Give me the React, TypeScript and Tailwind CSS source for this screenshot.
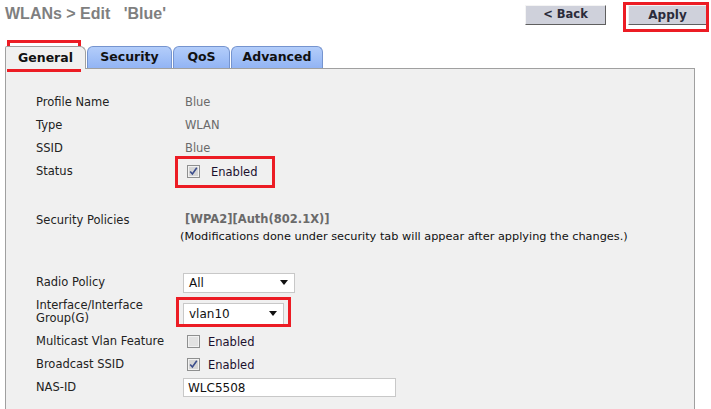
import React from "react";

const body = "font-['DejaVu_Sans',sans-serif]";

const Check = ({ checked }: { checked: boolean }) => (
  <svg width="13" height="13" viewBox="0 0 13 13" className="shrink-0">
    <rect x="0.5" y="0.5" width="12" height="12" fill="#f2f2f2" stroke="#8e8f8f" />
    <rect x="2" y="2" width="9" height="9" fill={checked ? "#d6d6d6" : "#e2e2e2"} />
    {checked && (
      <path d="M3.2 6.4 L5.4 9 L9.8 2.8" stroke="#3b4d8c" strokeWidth="1.6" fill="none" />
    )}
  </svg>
);

const Select = ({ value, width, h = "h-[20px]" }: { value: string; width: string; h?: string }) => (
  <div
    className={`${width} ${h} bg-white border border-[#c8c8c8] flex items-center justify-between pl-[5px] pr-[6px] text-[12px] text-[#111]`}
  >
    <span>{value}</span>
    <svg width="8" height="5" viewBox="0 0 8 5">
      <path d="M0 0 H8 L4 5 Z" fill="#111" />
    </svg>
  </div>
);

const Row = ({
  label,
  children,
  h = "h-[23px]",
}: {
  label: React.ReactNode;
  children?: React.ReactNode;
  h?: string;
}) => (
  <div className={`flex items-center ${h}`}>
    <div className="w-[147px] pl-[30px] box-content text-[#222] leading-[13px]">{label}</div>
    <div className="flex items-center">{children}</div>
  </div>
);

const Enabled = ({ checked, gap = "ml-[8px]" }: { checked: boolean; gap?: string }) => (
  <div className="flex items-center ml-[4px]">
    <Check checked={checked} />
    <span className={`${gap} pt-[3px] text-[#1a0f2e]`}>Enabled</span>
  </div>
);

export default function App() {
  return (
    <div className={`relative w-[711px] h-[409px] overflow-hidden bg-white text-[11.5px] ${body}`}>
      {/* header */}
      <div className="flex h-[46px]">
        <div className="ml-[5px] mt-[5px] leading-[18px] text-[16px] font-bold text-[#7f7f7f] font-['Liberation_Sans',Arial,sans-serif] whitespace-pre">
          {"WLANs > Edit   'Blue'"}
        </div>
        <div className="ml-auto mt-[5px] flex">
          <button className="w-[81px] h-[20px] bg-[#cfd1db] border border-t-[#f4f4f4] border-l-[#f4f4f4] border-r-[#5f5f5f] border-b-[#5f5f5f] text-[11.5px] font-bold text-[#2b2b3a] leading-none">
            &lt; Back
          </button>
          <button className="ml-[22px] mr-[4px] w-[79px] h-[20px] bg-[#cfd1db] border border-t-[#f4f4f4] border-l-[#f4f4f4] border-r-[#5f5f5f] border-b-[#5f5f5f] text-[12px] font-bold text-[#2b2b3a] leading-none">
            Apply
          </button>
        </div>
      </div>

      {/* tabs */}
      <div className="flex items-end h-[22px] ml-[5px] text-[12.5px] font-bold text-[#111]">
        <div className="relative top-[1px] z-10 w-[81px] h-[23px] bg-[#f0f0f0] border border-b-0 border-[#a0a0a0] rounded-tr-[6px] rounded-tl-[2px] flex items-center justify-center">
          General
        </div>
        <div className="ml-[1px] w-[85px] h-[22px] bg-gradient-to-b from-[#b3cdfa] to-[#92b4f4] border border-b-0 border-[#7594cf] rounded-t-[6px] flex items-center justify-center">
          Security
        </div>
        <div className="ml-[1px] w-[57px] h-[22px] bg-gradient-to-b from-[#b3cdfa] to-[#92b4f4] border border-b-0 border-[#7594cf] rounded-t-[6px] flex items-center justify-center">
          QoS
        </div>
        <div className="ml-[1px] w-[92px] h-[22px] bg-gradient-to-b from-[#b3cdfa] to-[#92b4f4] border border-b-0 border-[#7594cf] rounded-t-[6px] flex items-center justify-center">
          Advanced
        </div>
      </div>

      {/* panel */}
      <div className="ml-[5px] w-[690px] h-[360px] bg-[#f0f0f0] border border-[#a0a0a0] pt-[22px]">
        <Row label="Profile Name">
          <span className="ml-[2px] text-[#6a6a6a]">Blue</span>
        </Row>
        <Row label="Type">
          <span className="ml-[2px] text-[#6a6a6a]">WLAN</span>
        </Row>
        <Row label="SSID">
          <span className="ml-[2px] text-[#6a6a6a]">Blue</span>
        </Row>
        <Row label="Status">
          <Enabled checked gap="ml-[11px]" />
        </Row>

        <div className="h-[27px]" />
        <Row label="Security Policies" h="h-[20px]">
          <span className="ml-[2px] font-bold text-[#6a6a6a]">[WPA2][Auth(802.1X)]</span>
        </Row>
        <div className="h-[14px] leading-[14px] pl-[174px] text-[11.3px] text-[#111]">
          (Modifications done under security tab will appear after applying the changes.)
        </div>

        <div className="h-[27px]" />
        <Row label="Radio Policy">
          <Select value="All" width="w-[112px]" />
        </Row>
        <Row label={<>Interface/Interface<br />Group(G)</>} h="h-[36px]">
          <div className="pt-[3px]">
            <Select value="vlan10" width="w-[101px]" h="h-[22px]" />
          </div>
        </Row>
        <Row label="Multicast Vlan Feature">
          <Enabled checked={false} />
        </Row>
        <Row label="Broadcast SSID">
          <Enabled checked />
        </Row>
        <Row label="NAS-ID">
          <div className="w-[213px] h-[19px] bg-white border border-[#c8c8c8] pl-[4px] flex items-center text-[12px] text-[#111]">
            WLC5508
          </div>
        </Row>
      </div>

      {/* red annotation boxes */}
      <div className="absolute left-[623px] top-[2px] w-[86px] h-[30px] border-[3px] border-[#ec1c24]" />
      <div className="absolute left-[7px] top-[40px] w-[74px] h-[32px] border-[3px] border-[#ec1c24]" />
      <div className="absolute left-[175px] top-[156px] w-[100px] h-[32px] border-[3px] border-[#ec1c24]" />
      <div className="absolute left-[176px] top-[297px] w-[115px] h-[30px] border-[3px] border-[#ec1c24]" />
    </div>
  );
}
